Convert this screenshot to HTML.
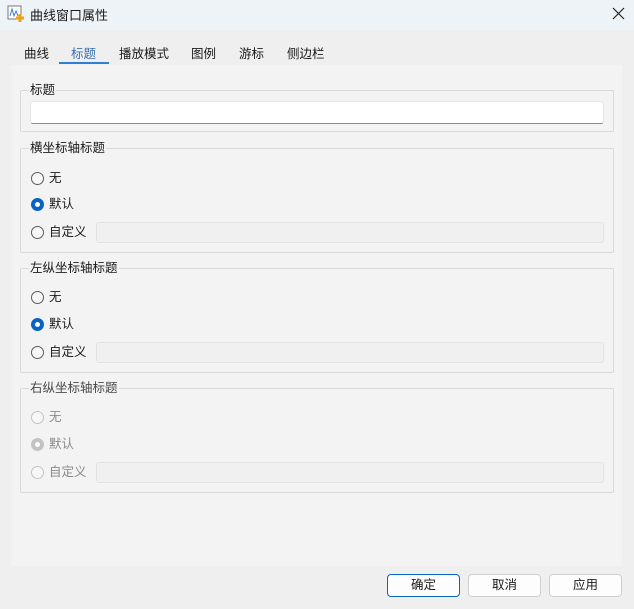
<!DOCTYPE html><html><head><meta charset="utf-8"><style>
*{box-sizing:border-box;margin:0;padding:0}
body{width:634px;height:609px;background:#efefef;font:12.5px "Liberation Sans","Noto Sans CJK SC",sans-serif;color:#1a1a1a;position:relative;overflow:hidden}
.a{position:absolute}
.title{left:0;top:0;width:634px;height:30px;background:#eef3f8}
.panel{left:11px;top:65px;width:611px;height:501px;background:#f3f3f3}
.g{position:absolute;left:20px;width:594px;border:1px solid #d9d9d9;border-radius:2px}
.gl{position:absolute;left:8px;top:-9px;background:#f3f3f3;padding:0 1px;font-size:12.5px;line-height:16px}
.r{position:absolute;left:10px;width:13px;height:13px;border:1px solid #5a5a5a;border-radius:50%;background:#f7f7f7}
.r.on{background:#fff;border:4px solid #0963c4}
.rl{position:absolute;left:28px;line-height:16px}
.tf{position:absolute;left:75px;width:508px;height:21px;background:#f0f0f0;border:1px solid #e2e2e2;border-radius:3px}
.dis .r{border-color:#c3c3c3;background:#f7f7f7}
.dis .r.on{border:4px solid #c3c3c3;background:#fff}
.dis .rl{color:#8a8a8a}
.dis .gl{color:#4a4a4a}
.tab{position:absolute;top:43px;font-size:12.5px}
.btn{position:absolute;top:574px;width:73px;height:23px;background:#fdfdfd;border:1px solid #cfcfcf;border-radius:4px;text-align:center;line-height:21px}
</style></head><body>
<div class="a title"></div>
<svg class="a" style="left:7px;top:5px" width="18" height="18" viewBox="0 0 18 18"><rect x="1" y="1" width="13" height="13" fill="#fff" stroke="#777"/><path d="M3 11 L5 4 L7 11 L9 6 L11 11" stroke="#3a7bd5" fill="none"/><path d="M13 9v8M9 13h8" stroke="#e8a317" stroke-width="3"/></svg>
<div class="a" style="left:30px;top:5px;font-size:13px">曲线窗口属性</div>
<svg class="a" style="left:612px;top:7px" width="14" height="14"><path d="M1 1L12 12M12 1L1 12" stroke="#222" stroke-width="1.2"/></svg>
<div class="tab" style="left:24px">曲线</div>
<div class="tab" style="left:71px;color:#3c6fb0">标题</div>
<div class="a" style="left:59px;top:62px;width:50px;height:2px;background:#2f7fd6"></div>
<div class="tab" style="left:119px">播放模式</div>
<div class="tab" style="left:191px">图例</div>
<div class="tab" style="left:239px">游标</div>
<div class="tab" style="left:287px">侧边栏</div>
<div class="a panel"></div>
<div class="g" style="top:90px;height:42px"><div class="gl">标题</div>
<div class="a" style="left:9px;top:10px;width:574px;height:23px;background:#fff;border:1px solid #e5e5e5;border-bottom:1px solid #8a8a8a;border-radius:3px"></div></div>
<div class="g" style="top:148px;height:105px"><div class="gl">横坐标轴标题</div>
<div class="r" style="top:23px"></div><div class="rl" style="top:21px">无</div>
<div class="r on" style="top:49px"></div><div class="rl" style="top:47px">默认</div>
<div class="r" style="top:77px"></div><div class="rl" style="top:75px">自定义</div><div class="tf" style="top:73px"></div></div>
<div class="g" style="top:268px;height:105px"><div class="gl">左纵坐标轴标题</div>
<div class="r" style="top:22px"></div><div class="rl" style="top:20px">无</div>
<div class="r on" style="top:49px"></div><div class="rl" style="top:47px">默认</div>
<div class="r" style="top:77px"></div><div class="rl" style="top:75px">自定义</div><div class="tf" style="top:73px"></div></div>
<div class="g dis" style="top:388px;height:105px"><div class="gl">右纵坐标轴标题</div>
<div class="r" style="top:22px"></div><div class="rl" style="top:20px">无</div>
<div class="r on" style="top:49px"></div><div class="rl" style="top:47px">默认</div>
<div class="r" style="top:77px"></div><div class="rl" style="top:75px">自定义</div><div class="tf" style="top:73px"></div></div>
<div class="btn" style="left:387px;border:1px solid #0a64c2">确定</div>
<div class="btn" style="left:468px">取消</div>
<div class="btn" style="left:549px">应用</div>
</body></html>
